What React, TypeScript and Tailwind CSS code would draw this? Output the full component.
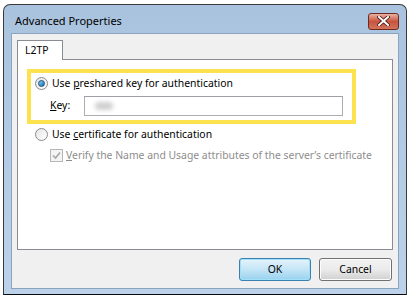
import React from 'react'

const font = { fontFamily: '"Noto Sans", "Open Sans", sans-serif' }

const Radio = ({ checked }: { checked?: boolean }) => (
  <span className="relative flex h-[13px] w-[13px] shrink-0 items-center justify-center rounded-full border border-[#8a8a8a] bg-gradient-to-br from-[#e6e6e6] to-[#ffffff]">
    {checked && (
      <span className="h-[7px] w-[7px] rounded-full border border-[#1c4f7c] bg-gradient-to-br from-[#7fd4f5] to-[#1a6fae]" />
    )}
  </span>
)

export default function App() {
  return (
    <div
      className="h-[299px] w-[411px] bg-white pl-[3px] pr-[4px] pt-[4px] text-[10.4px] text-black"
      style={font}
    >
      <div className="flex h-[291px] flex-col rounded-t-[7px] border border-[#3a3a3a] border-b-[#0a0a0a] bg-gradient-to-b from-[#a9c3de] to-[#bcd2ea] px-[7px] pb-[5px]">
        {/* title bar */}
        <div className="flex h-[28px] items-center justify-between pt-[4px]">
          <span className="pl-[4px] text-[11px] text-black">Advanced Properties</span>
          <div className="flex h-[17px] w-[31px] items-center justify-center rounded-[3px] border border-[#6b2b20] bg-gradient-to-b from-[#eab0a2] via-[#c8533f] to-[#d4735a]">
            <svg width="13" height="10" viewBox="0 0 13 10">
              <path
                d="M2 1 L11 9 M11 1 L2 9"
                stroke="#4a1a12"
                strokeWidth="3.6"
                strokeLinecap="square"
              />
              <path
                d="M2 1 L11 9 M11 1 L2 9"
                stroke="#ffffff"
                strokeWidth="2"
                strokeLinecap="square"
              />
            </svg>
          </div>
        </div>

        {/* client area */}
        <div className="flex flex-1 flex-col border border-[#8aa3bf] bg-[#f0f0f0] px-[5px] pt-[6px]">
          <div className="flex">
            <div className="relative z-10 -mb-px flex h-[20px] w-[46px] items-center border border-b-0 border-[#898c95] bg-white pl-[7px]">
              L2TP
            </div>
          </div>
          <div className="flex h-[191px] flex-col border border-[#898c95] bg-white pl-[9px] pt-[9px]">
            <div className="flex h-[55px] w-[329px] flex-col border-[4px] border-[#fde24f] pl-[4px] pt-[3px]">
              <label className="flex items-center gap-[4px]">
                <Radio checked />
                <span>
                  Use <u>p</u>reshared key for authentication
                </span>
              </label>
              <div className="mt-[4px] flex items-center pl-[15px]">
                <span className="w-[34px]">
                  <u>K</u>ey:
                </span>
                <div className="flex h-[20px] w-[259px] items-center border border-[#abadb3] border-t-[#9ea0a6] bg-white pl-[10px]">
                  <span className="h-[8px] w-[18px] rounded-full bg-[#cfcfcf] blur-[2px]" />
                </div>
              </div>
            </div>
            <label className="mt-[3px] flex items-center gap-[4px] pl-[8px]">
              <Radio />
              <span>
                Use <u>c</u>ertificate for authentication
              </span>
            </label>
            <label className="mt-[5px] flex items-center gap-[3px] pl-[23px] text-[#8d8d8d]">
              <span className="flex h-[13px] w-[13px] shrink-0 items-center justify-center border border-[#b6b6b6] bg-[#f4f4f4]">
                <svg width="9" height="9" viewBox="0 0 9 9">
                  <path d="M1 4.5 L3.5 7 L8 1.5" stroke="#a8a8a8" strokeWidth="1.6" fill="none" />
                </svg>
              </span>
              <span className="whitespace-nowrap">
                <u>V</u>erify the Name and Usage attributes of the server’s certificate
              </span>
            </label>
          </div>

          <div className="mt-[8px] flex justify-end gap-[8px] pr-[1px]">
            <button className="h-[23px] w-[72px] rounded-[3px] border border-[#3c7fb1] bg-gradient-to-b from-[#e5f4fc] via-[#c4e5f6] to-[#98d1ef] shadow-[inset_0_0_0_1px_#9ee1f8]">
              OK
            </button>
            <button className="h-[23px] w-[73px] rounded-[3px] border border-[#707070] bg-gradient-to-b from-[#f2f2f2] via-[#ebebeb] to-[#cfcfcf] shadow-[inset_0_0_0_1px_#fcfcfc]">
              Cancel
            </button>
          </div>
        </div>
      </div>
    </div>
  )
}
